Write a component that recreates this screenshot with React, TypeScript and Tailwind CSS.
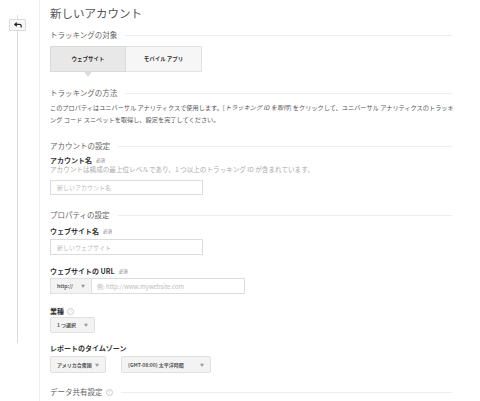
import React from "react";

const font = { fontFamily: '"Noto Sans CJK JP", "Liberation Sans", sans-serif' };

function Heading({ children, className = "" }: { children: React.ReactNode; className?: string }) {
  return (
    <div className={`flex h-[16px] items-center gap-2 ${className}`}>
      <span className="whitespace-nowrap text-[7.5px] text-[#666]">{children}</span>
      <div className="h-px flex-1 bg-[#eeeeee]" />
    </div>
  );
}

function Help() {
  return (
    <span className="ml-[3px] inline-flex h-[7px] w-[7px] items-center justify-center rounded-full border border-[#ccc] text-[4.5px] leading-none text-[#bbb]">
      ?
    </span>
  );
}

function Label({ children, required, help, className = "" }: { children: React.ReactNode; required?: boolean; help?: boolean; className?: string }) {
  return (
    <div className={`flex h-[10px] items-center ${className}`}>
      <span className="whitespace-nowrap text-[7px] font-bold text-[#333]">{children}</span>
      {required && <span className="ml-[4px] text-[4.5px] text-[#888]">必須</span>}
      {help && <Help />}
    </div>
  );
}

function Arrow() {
  return <span className="text-[4px] text-[#999]">▼</span>;
}

function Select({ children, className = "" }: { children: React.ReactNode; className?: string }) {
  return (
    <div className={`flex items-center justify-between rounded-[2px] border border-[#e0e0e0] bg-[#f3f3f3] px-[6px] ${className}`}>
      <span className="whitespace-nowrap text-[5px] font-bold text-[#555]">{children}</span>
      <Arrow />
    </div>
  );
}

function Input({ placeholder, className = "" }: { placeholder: string; className?: string }) {
  return (
    <div className={`flex items-center border border-[#dcdcdc] bg-white px-[6px] ${className}`}>
      <span className="whitespace-nowrap text-[6px] text-[#bbb]">{placeholder}</span>
    </div>
  );
}

export default function App() {
  return (
    <div className="flex h-[401px] w-[480px] overflow-hidden bg-white" style={font}>
      <div className="relative w-[40px] shrink-0 border-r border-[#eeeeee]">
        <div className="absolute left-[17px] top-[15px] h-[328px] w-px bg-[#dcdcdc]" />
        <div className="relative ml-[9px] mt-[19px] flex h-[12px] w-[17px] items-center justify-center rounded-[1px] border border-[#dadada] bg-[#f7f7f7]">
          <svg width="8" height="6" viewBox="0 0 8 6">
            <path d="M2.8 0.6 L0.8 2.4 L2.8 4.2 M1 2.4 H5.6 Q7.2 2.4 7.2 4 V5.6" fill="none" stroke="#222" strokeWidth="1.2" />
          </svg>
        </div>
      </div>

      <div className="w-[412px] pl-[10px]">
        <div className="flex h-[27px] items-center text-[11.5px] text-[#555]">新しいアカウント</div>

        <Heading>トラッキングの対象</Heading>

        <div className="relative mt-[3px] flex h-[26px] w-[152px]">
          <div className="flex w-[76px] items-center justify-center border border-[#dadada] bg-[#e8e8e8] text-[5.5px] font-bold text-[#333]">
            ウェブサイト
          </div>
          <div className="flex w-[76px] items-center justify-center border border-l-0 border-[#e2e2e2] bg-[#f6f6f6] text-[5.5px] font-bold text-[#333]">
            モバイル アプリ
          </div>
          <div className="absolute left-[34px] top-[26px] h-0 w-0 border-x-[4px] border-t-[5px] border-x-transparent border-t-[#dcdcdc]" />
        </div>

        <Heading className="mt-[13px]">トラッキングの方法</Heading>

        <div className="mt-[1px] whitespace-nowrap text-[6.2px] leading-[12px] text-[#555]">
          このプロパティはユニバーサル アナリティクスで使用します。[
          <i>トラッキング ID を取得</i>
          <span className="text-[#4a7bd0]">]</span> をクリックして、ユニバーサル アナリティクスのトラッキ
          <br />
          ング コード スニペットを取得し、設定を完了してください。
        </div>

        <Heading className="mt-[12px]">アカウントの設定</Heading>
        <Label required className="mt-px">アカウント名</Label>
        <div className="flex h-[10px] items-center whitespace-nowrap text-[6.6px] text-[#aaa]">
          アカウントは構成の最上位レベルであり、1 つ以上のトラッキング ID が含まれています。
        </div>
        <Input placeholder="新しいアカウント名" className="mt-[5px] h-[15px] w-[153px]" />

        <Heading className="mt-[12px]">プロパティの設定</Heading>
        <Label required className="mt-[3px]">ウェブサイト名</Label>
        <Input placeholder="新しいウェブサイト" className="mt-[3px] h-[16px] w-[153px]" />

        <Label required className="mt-[11px]">ウェブサイトの URL</Label>
        <div className="mt-[2px] flex h-[16px] w-[195px]">
          <div className="flex w-[42px] items-center justify-between border border-[#e0e0e0] bg-[#f3f3f3] px-[6px]">
            <span className="text-[5px] font-bold text-[#555]">http://</span>
            <Arrow />
          </div>
          <div className="flex flex-1 items-center border border-l-0 border-[#dcdcdc] px-[5px] text-[6px] text-[#bbb]">
            例: http://www.mywebsite.com
          </div>
        </div>

        <Label help className="mt-[12px]">業種</Label>
        <Select className="mt-px h-[16px] w-[45px]">1 つ選択</Select>

        <Label className="mt-[10px]">レポートのタイムゾーン</Label>
        <div className="mt-[3px] flex h-[17px] gap-[15px]">
          <Select className="w-[56px]">アメリカ合衆国</Select>
          <Select className="w-[90px]">(GMT-08:00) 太平洋時間</Select>
        </div>

        <div className="mt-[11px] flex h-[16px] items-center gap-2">
          <span className="flex items-center whitespace-nowrap text-[7.5px] text-[#666]">
            データ共有設定
            <Help />
          </span>
          <div className="h-px flex-1 bg-[#eeeeee]" />
        </div>
      </div>
    </div>
  );
}
